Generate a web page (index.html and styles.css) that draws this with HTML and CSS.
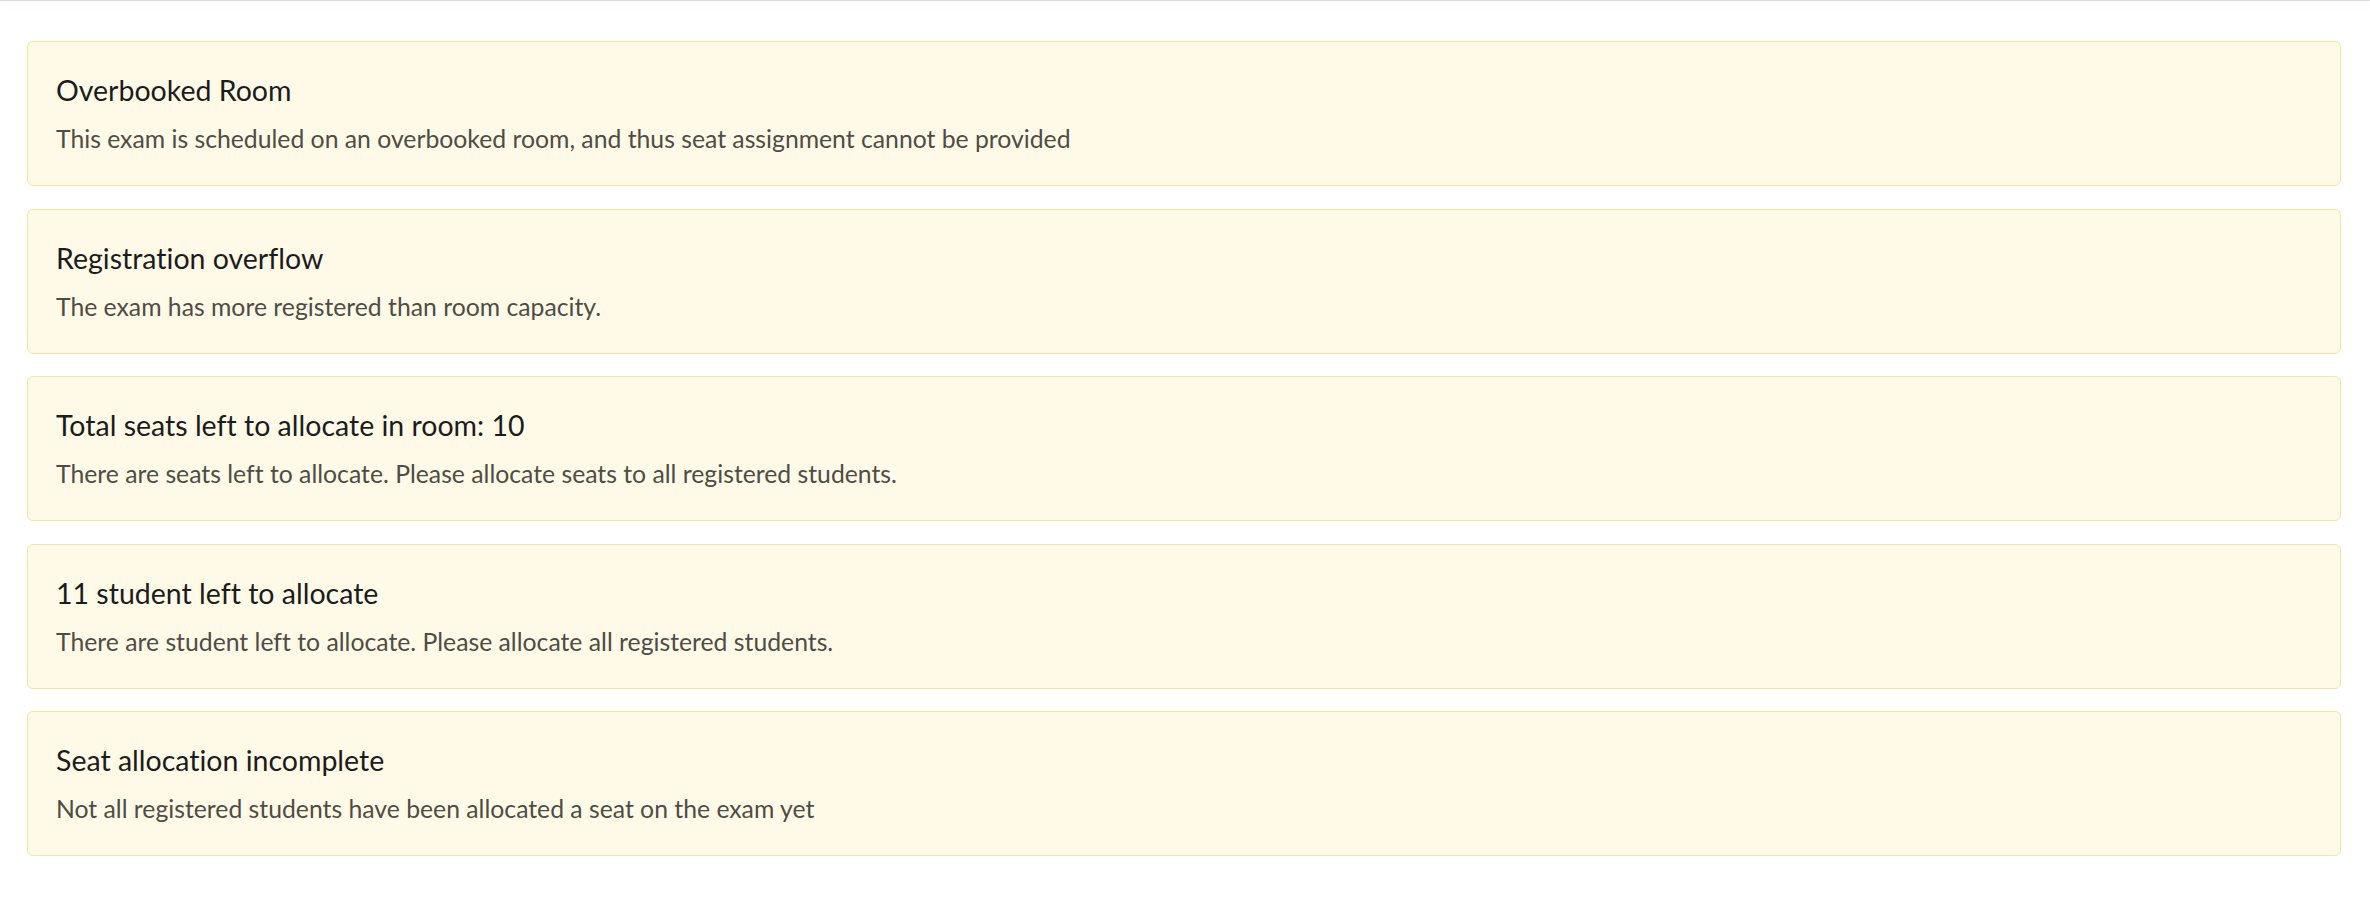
FILE: index.html
```html
<!DOCTYPE html>
<html lang="en">
<head>
    <meta charset="UTF-8">
    <meta name="viewport" content="width=device-width, initial-scale=1.0">
    <title>Exam - Seat Allocation Warnings</title>
    <link rel="stylesheet" href="styles.css">
</head>
<body>
    <div class="topbar"></div>

    <div class="container">
        <div class="message">
            <div class="message-title">Overbooked Room</div>
            <p>This exam is scheduled on an overbooked room, and thus seat assignment cannot be provided</p>
        </div>
        <div class="message">
            <div class="message-title">Registration overflow</div>
            <p>The exam has more registered than room capacity.</p>
        </div>
        <div class="message">
            <div class="message-title">Total seats left to allocate in room: 10</div>
            <p>There are seats left to allocate. Please allocate seats to all registered students.</p>
        </div>
        <div class="message">
            <div class="message-title">11 student left to allocate</div>
            <p>There are student left to allocate. Please allocate all registered students.</p>
        </div>
        <div class="message">
            <div class="message-title">Seat allocation incomplete</div>
            <p>Not all registered students have been allocated a seat on the exam yet</p>
        </div>
    </div>
</body>
</html>
```

FILE: styles.css
```css
body {
    font-family: Lato, "Open Sans", Arial, sans-serif;
    font-variant-ligatures: none;
    margin: 0;
    padding: 0;
    background-color: #fff;
}
.topbar {
    height: 1px;
    background-color: #d3dae2;
    box-shadow: 0 3px 16px rgba(34, 50, 80, 0.12);
}
.container {
    padding: 40px 29px 0 27px;
}
.message {
    background-color: #fefae7;
    border: 1px solid #f8e59c;
    border-radius: 6px;
    padding: 31px 28px 29px 28px;
    margin-bottom: 22.5px;
}
.message-title {
    font-size: 28.5px;
    line-height: 34px;
    color: #1c1c1c;
    margin-bottom: 14px;
}
.message p {
    margin: 0;
    font-size: 24.75px;
    line-height: 35px;
    color: #4f4c45;
}
```
